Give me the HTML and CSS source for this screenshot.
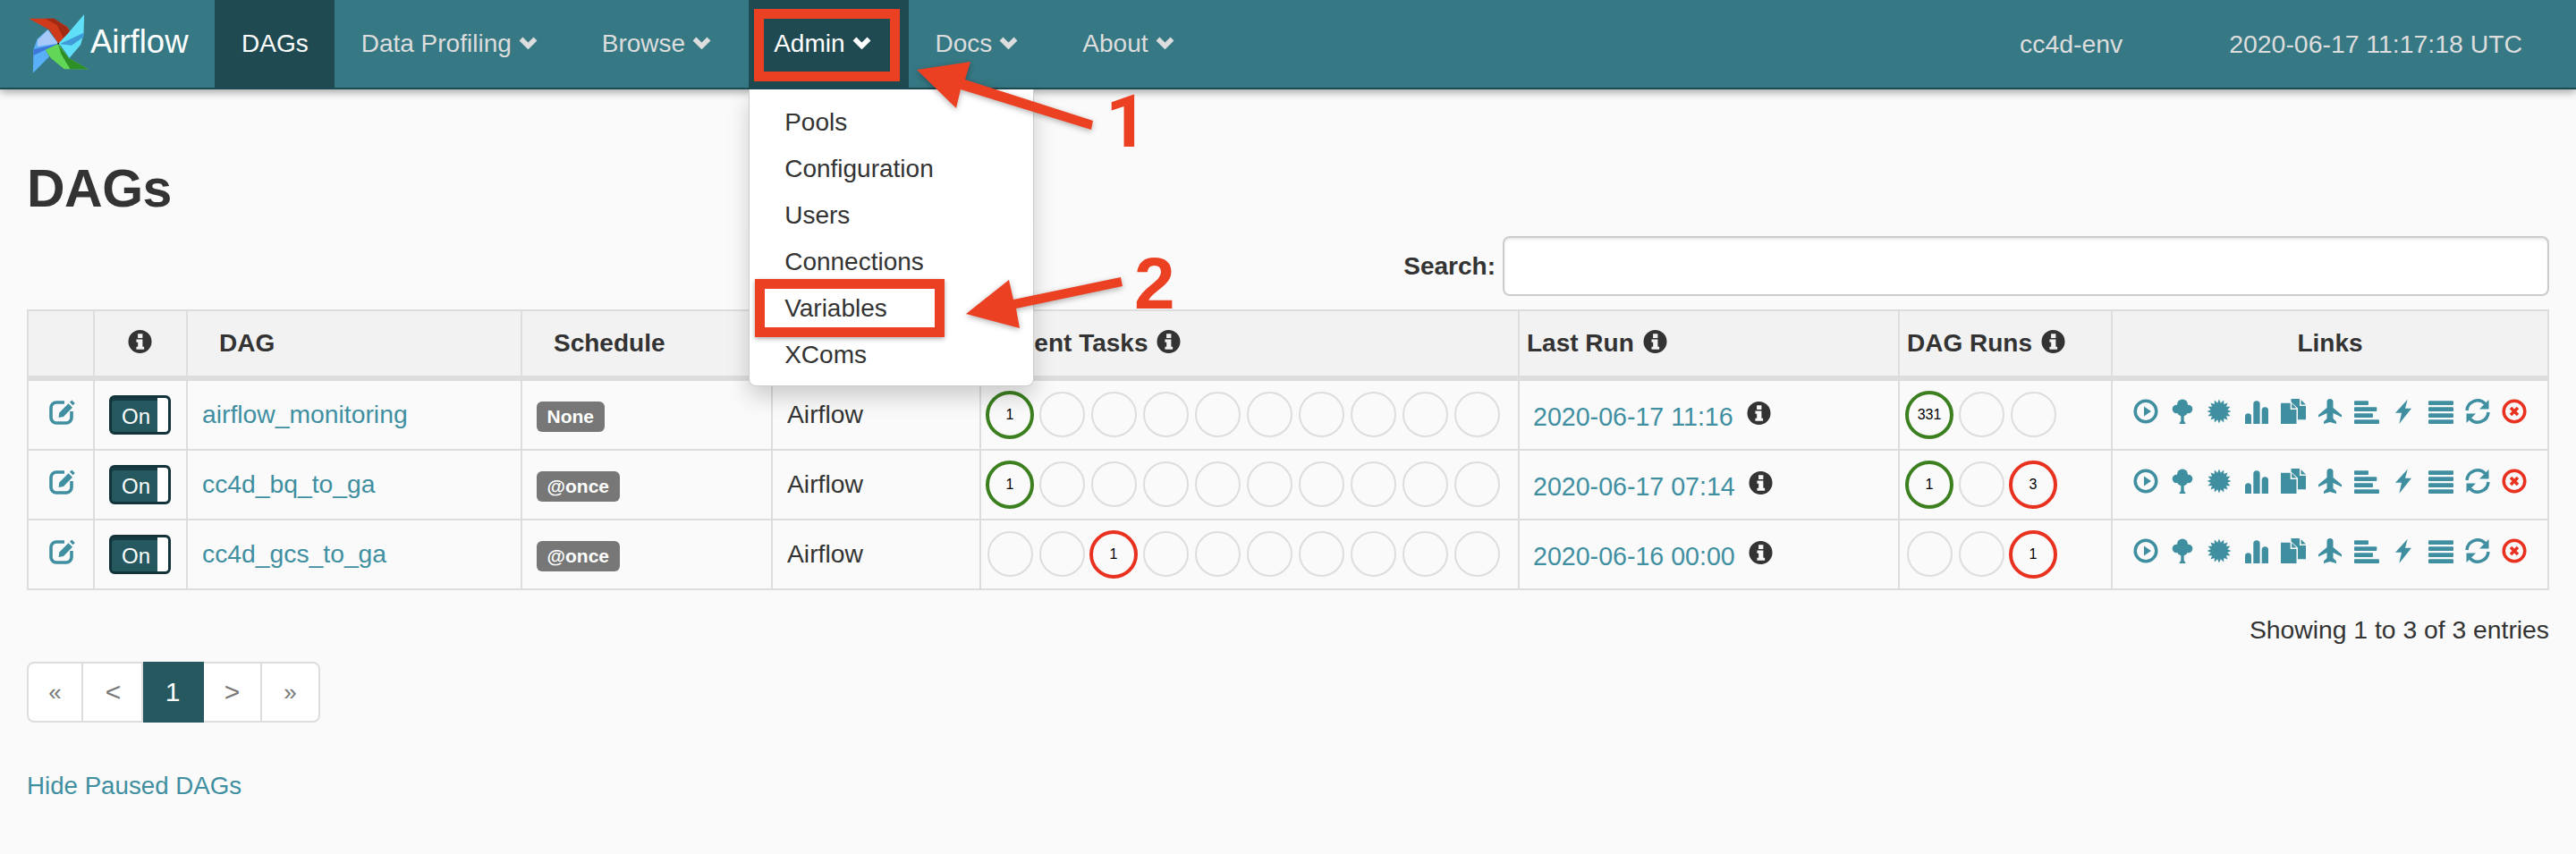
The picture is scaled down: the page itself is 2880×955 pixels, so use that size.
FILE: index.html
```html
<!DOCTYPE html>
<html lang="en">
<head>
<meta charset="utf-8">
<title>DAGs - Airflow</title>
<link rel="stylesheet" href="styles.css">
</head>
<body>
<svg class="sprite" width="0" height="0" aria-hidden="true">
  <symbol id="i-info" viewBox="0 0 28 28"><path fill-rule="evenodd" d="M14 .5a13.5 13.5 0 1 0 0 27 13.500 13.500 0 0 0 0-27zM11.500 5h5.500v4.800h-5.500zM9.800 11.500h7.200v8.500h1.800v3.200H9.800V20h1.800v-5.300H9.800z"/></symbol>
  <symbol id="i-edit" viewBox="0 0 29 28"><path class="ln" d="M17 3H8a6 6 0 0 0-6 6v11a6 6 0 0 0 6 6h11a6 6 0 0 0 6-6v-7"/><path d="M10.500 20l.800-5.500L21.500 4.300l4.500 4.500L16 19zM23 2.800l2.300-2.300 3.500 3.500-2.300 2.300z"/></symbol>
  <symbol id="i-play" viewBox="0 0 28 28"><circle class="ln" cx="14" cy="14" r="11.800"/><path d="M12 8.500l8 5.500-8 5.500z"/></symbol>
  <symbol id="i-tree" viewBox="0 0 28 28"><circle cx="14" cy="6.500" r="6"/><circle cx="7.500" cy="11.500" r="4.800"/><circle cx="20.500" cy="11.500" r="4.800"/><circle cx="14" cy="13" r="6.500"/><path d="M12.300 15h3.400v9.500l2 3.500H10.300l2-3.500z"/></symbol>
  <symbol id="i-burst" viewBox="0 0 28 28"><polygon points="27.500,14 23.320,15.850 26.470,19.170 21.900,19.280 23.550,23.550 19.280,21.900 19.170,26.470 15.850,23.320 14,27.500 12.150,23.320 8.830,26.470 8.720,21.900 4.450,23.550 6.100,19.280 1.530,19.170 4.680,15.850 .5,14 4.680,12.150 1.530,8.830 6.100,8.720 4.450,4.450 8.720,6.100 8.830,1.530 12.150,4.680 14,.5 15.850,4.680 19.170,1.530 19.280,6.100 23.550,4.450 21.900,8.720 26.470,8.830 23.320,12.150"/></symbol>
  <symbol id="i-bars" viewBox="0 0 28 28"><path d="M1 28V19.800a3.500 3.500 0 0 1 7 0V28zM10.300 28V5.800a3.600 3.600 0 0 1 7.300 0V28zM19.700 28V12.800a3.600 3.600 0 0 1 7.300 0V28z"/></symbol>
  <symbol id="i-files" viewBox="0 0 28 28"><path d="M0 4.700h10.700V12h6.800v16H0zM12.200 5l5.300 5.500h-5.300zM11.500 0H21v8h7v15.300h-9V10.500L11.500 3.500zM22.500 1l5.500 5.500h-5.500z"/></symbol>
  <symbol id="i-plane" viewBox="0 0 28 28"><path d="M14 0a3.500 3.500 0 0 1 3.500 3.500V10l9.500 8v2.500L17.500 16v6l3.500 3.500V28l-7-2-7 2v-2.500l3.500-3.500v-6L1 20.500V18l9.500-8V3.500A3.500 3.500 0 0 1 14 0z"/></symbol>
  <symbol id="i-align" viewBox="0 0 28 28"><rect y="2.300" width="16" height="4.700" rx="1"/><rect y="9.300" width="25.300" height="4.700" rx="1"/><rect y="16.300" width="21" height="4.700" rx="1"/><rect y="23.300" width="28" height="4.700" rx="1"/></symbol>
  <symbol id="i-flash" viewBox="0 0 28 28"><path d="M18.700.7L5 15.700h7L9.300 28 23 10.700h-7z"/></symbol>
  <symbol id="i-list" viewBox="0 0 28 28"><rect y="2.300" width="28" height="4.700" rx="1"/><rect y="9.300" width="28" height="4.700" rx="1"/><rect y="16.300" width="28" height="4.700" rx="1"/><rect y="23.300" width="28" height="4.700" rx="1"/></symbol>
  <symbol id="i-sync" viewBox="0 0 28 28"><path class="ln" d="M2 13A12 12 0 0 1 22.500 5.500M26 15A12 12 0 0 1 5.500 22.500"/><path d="M26.500 1v10.500H16zM1.500 27V16.500H12z"/></symbol>
  <symbol id="i-remove" viewBox="0 0 28 28"><circle class="ln" cx="14" cy="14" r="11.800"/><path class="ln" d="M10 10l8 8M18 10l-8 8"/></symbol>
  <symbol id="i-chev" viewBox="0 0 21 14"><path class="ln" d="M2.500 2.500l8 8 8-8"/></symbol>
</svg>

<header class="navbar">
  <a class="brand">
    <svg class="logo" viewBox="96 48 200 198" aria-hidden="true">
      <path fill="#cf3a1b" d="M96 62h84l45 28 17 28-20 17-27 11-30-46z"/>
      <path fill="#a32a14" d="M150 62h32l42 30 18 26-28 12-24-46z"/>
      <path fill="#5fe0f8" d="M282 48l-2 67-10 35-38 45-27-40-10-9 30-31z"/>
      <path fill="#3f9ad8" d="M200 148l80-38v14l-40 28z"/>
      <path fill="#62d657" d="M295 232h-80l-45-37-20-30 45-19 35 49z"/>
      <path fill="#2f8f27" d="M195 150l35 45 65 37h-60l-30-50z"/>
      <path fill="#5ab0f8" d="M110 245l2-80 13-35 35-30 35 46-45 19 15 25z"/>
      <path fill="#a5c8f8" d="M125 135l35-35 35 46-70 10z"/>
      <path fill="#3f78dc" d="M112 165l83-19-40 20-43 20z"/>
      <circle cx="195" cy="146" r="3" fill="#111"/>
    </svg>
    <span class="brand-name">Airflow</span>
  </a>
  <ul class="menu">
    <li class="menu-item is-active plain"><span>DAGs</span></li>
    <li class="menu-item"><span>Data Profiling</span><svg class="chev"><use href="#i-chev"/></svg></li>
    <li class="menu-item"><span>Browse</span><svg class="chev"><use href="#i-chev"/></svg></li>
    <li class="menu-item is-open">
      <span>Admin</span><svg class="chev"><use href="#i-chev"/></svg>
      <ul class="dropdown">
        <li>Pools</li>
        <li>Configuration</li>
        <li>Users</li>
        <li>Connections</li>
        <li>Variables</li>
        <li>XComs</li>
      </ul>
    </li>
    <li class="menu-item"><span>Docs</span><svg class="chev"><use href="#i-chev"/></svg></li>
    <li class="menu-item"><span>About</span><svg class="chev"><use href="#i-chev"/></svg></li>
  </ul>
  <div class="nav-right">
    <span class="env">cc4d-env</span>
    <span class="clock">2020-06-17 11:17:18 UTC</span>
  </div>
</header>

<main class="container">
  <h1 class="title">DAGs</h1>
  <div class="search-row">
    <label class="search-label" for="q">Search:</label>
    <input class="search-input" id="q" type="text">
  </div>

  <table class="dags">
    <colgroup>
      <col class="c-edit"><col class="c-switch"><col class="c-dag"><col class="c-sched"><col class="c-owner"><col class="c-recent"><col class="c-last"><col class="c-runs"><col class="c-links">
    </colgroup>
    <thead>
      <tr>
        <th></th>
        <th class="th-center th-icon"><svg class="info"><use href="#i-info"/></svg></th>
        <th class="th-wide">DAG</th>
        <th class="th-wide">Schedule</th>
        <th class="th-wide"></th>
        <th><span class="th-in">Recent Tasks<svg class="info"><use href="#i-info"/></svg></span></th>
        <th><span class="th-in">Last Run<svg class="info"><use href="#i-info"/></svg></span></th>
        <th><span class="th-in">DAG Runs<svg class="info"><use href="#i-info"/></svg></span></th>
        <th class="th-center">Links</th>
      </tr>
    </thead>
    <tbody>
      <tr>
        <td class="td-edit"><svg class="edit"><use href="#i-edit"/></svg></td>
        <td><div class="switch"><span class="switch-on">On</span><span class="switch-handle"></span></div></td>
        <td class="td-name"><a class="link">airflow_monitoring</a></td>
        <td class="td-sched"><span class="label">None</span></td>
        <td class="td-name">Airflow</td>
        <td class="td-circles"><div class="circles"><span class="slot"><span class="dot ok">1</span></span><span class="slot"><span class="dot"></span></span><span class="slot"><span class="dot"></span></span><span class="slot"><span class="dot"></span></span><span class="slot"><span class="dot"></span></span><span class="slot"><span class="dot"></span></span><span class="slot"><span class="dot"></span></span><span class="slot"><span class="dot"></span></span><span class="slot"><span class="dot"></span></span><span class="slot"><span class="dot"></span></span></div></td>
        <td class="td-date"><span class="date"><a class="link">2020-06-17 11:16</a><svg class="info"><use href="#i-info"/></svg></span></td>
        <td class="td-circles"><div class="circles runs"><span class="slot"><span class="dot ok">331</span></span><span class="slot"><span class="dot"></span></span><span class="slot"><span class="dot"></span></span></div></td>
        <td class="td-links"><div class="icons"><svg><use href="#i-play"/></svg><svg><use href="#i-tree"/></svg><svg><use href="#i-burst"/></svg><svg><use href="#i-bars"/></svg><svg><use href="#i-files"/></svg><svg><use href="#i-plane"/></svg><svg><use href="#i-align"/></svg><svg><use href="#i-flash"/></svg><svg><use href="#i-list"/></svg><svg><use href="#i-sync"/></svg><svg class="danger"><use href="#i-remove"/></svg></div></td>
      </tr>
      <tr>
        <td class="td-edit"><svg class="edit"><use href="#i-edit"/></svg></td>
        <td><div class="switch"><span class="switch-on">On</span><span class="switch-handle"></span></div></td>
        <td class="td-name"><a class="link">cc4d_bq_to_ga</a></td>
        <td class="td-sched"><span class="label">@once</span></td>
        <td class="td-name">Airflow</td>
        <td class="td-circles"><div class="circles"><span class="slot"><span class="dot ok">1</span></span><span class="slot"><span class="dot"></span></span><span class="slot"><span class="dot"></span></span><span class="slot"><span class="dot"></span></span><span class="slot"><span class="dot"></span></span><span class="slot"><span class="dot"></span></span><span class="slot"><span class="dot"></span></span><span class="slot"><span class="dot"></span></span><span class="slot"><span class="dot"></span></span><span class="slot"><span class="dot"></span></span></div></td>
        <td class="td-date"><span class="date"><a class="link">2020-06-17 07:14</a><svg class="info"><use href="#i-info"/></svg></span></td>
        <td class="td-circles"><div class="circles runs"><span class="slot"><span class="dot ok">1</span></span><span class="slot"><span class="dot"></span></span><span class="slot"><span class="dot bad">3</span></span></div></td>
        <td class="td-links"><div class="icons"><svg><use href="#i-play"/></svg><svg><use href="#i-tree"/></svg><svg><use href="#i-burst"/></svg><svg><use href="#i-bars"/></svg><svg><use href="#i-files"/></svg><svg><use href="#i-plane"/></svg><svg><use href="#i-align"/></svg><svg><use href="#i-flash"/></svg><svg><use href="#i-list"/></svg><svg><use href="#i-sync"/></svg><svg class="danger"><use href="#i-remove"/></svg></div></td>
      </tr>
      <tr>
        <td class="td-edit"><svg class="edit"><use href="#i-edit"/></svg></td>
        <td><div class="switch"><span class="switch-on">On</span><span class="switch-handle"></span></div></td>
        <td class="td-name"><a class="link">cc4d_gcs_to_ga</a></td>
        <td class="td-sched"><span class="label">@once</span></td>
        <td class="td-name">Airflow</td>
        <td class="td-circles"><div class="circles"><span class="slot"><span class="dot"></span></span><span class="slot"><span class="dot"></span></span><span class="slot"><span class="dot bad">1</span></span><span class="slot"><span class="dot"></span></span><span class="slot"><span class="dot"></span></span><span class="slot"><span class="dot"></span></span><span class="slot"><span class="dot"></span></span><span class="slot"><span class="dot"></span></span><span class="slot"><span class="dot"></span></span><span class="slot"><span class="dot"></span></span></div></td>
        <td class="td-date"><span class="date"><a class="link">2020-06-16 00:00</a><svg class="info"><use href="#i-info"/></svg></span></td>
        <td class="td-circles"><div class="circles runs"><span class="slot"><span class="dot"></span></span><span class="slot"><span class="dot"></span></span><span class="slot"><span class="dot bad">1</span></span></div></td>
        <td class="td-links"><div class="icons"><svg><use href="#i-play"/></svg><svg><use href="#i-tree"/></svg><svg><use href="#i-burst"/></svg><svg><use href="#i-bars"/></svg><svg><use href="#i-files"/></svg><svg><use href="#i-plane"/></svg><svg><use href="#i-align"/></svg><svg><use href="#i-flash"/></svg><svg><use href="#i-list"/></svg><svg><use href="#i-sync"/></svg><svg class="danger"><use href="#i-remove"/></svg></div></td>
      </tr>
    </tbody>
  </table>

  <p class="entries">Showing 1 to 3 of 3 entries</p>

  <ul class="pager">
    <li class="pg pg-first">«</li>
    <li class="pg pg-prev">&lt;</li>
    <li class="pg pg-cur">1</li>
    <li class="pg pg-next">&gt;</li>
    <li class="pg pg-last">»</li>
  </ul>

  <p class="hide-paused"><a class="link">Hide Paused DAGs</a></p>
</main>

<div class="mark mark-admin"></div>
<div class="mark mark-vars"></div>
<svg class="arrows" viewBox="0 0 2880 955" aria-hidden="true">
  <polygon points="1025,78 1085,69 1079,89 1222,135 1220,145 1074,100 1069,121"/>
  <polygon points="1080,351 1128,313 1133,335 1253,310 1255,320 1136,345 1140,367"/>
</svg>
<span class="num num-1">1</span>
<span class="num num-2">2</span>
</body>
</html>
```
FILE: styles.css
```css
* { box-sizing: border-box; }

html, body {
  margin: 0;
  padding: 0;
}

body {
  position: relative;
  min-height: 955px;
  overflow: hidden;
  background: #fafafa;
  color: #333;
  font-family: "Liberation Sans", Arial, sans-serif;
  font-size: 28px;
  line-height: 40px;
}

ul { margin: 0; padding: 0; list-style: none; }
p { margin: 0; }

.sprite { position: absolute; }
symbol .ln, .ln { fill: none; stroke: currentColor; }

/* nav */
.navbar {
  position: relative;
  z-index: 2;
  display: flex;
  align-items: stretch;
  height: 100px;
  padding-left: 30px;
  background: #367884;
  border-bottom: 2px solid #1c4a52;
  box-shadow: 0 3px 9px rgba(0, 0, 0, .35);
  color: #ddd;
}

.brand {
  display: flex;
  align-items: flex-start;
  width: 210px;
}

.logo {
  width: 67px;
  height: 66px;
  margin: 16px 0 0 2px;
}

.brand-name {
  color: #fff;
  font-size: 36.5px;
  line-height: 42px;
  margin: 26px 0 0 2px;
}

.menu { display: flex; }

.menu-item {
  position: relative;
  display: flex;
  align-items: center;
  gap: 8px;
  height: 98px;
  padding: 0 42px 0 30px;
}

.menu-item.plain { padding-right: 29px; }
.menu-item.is-active { background: #1f4a52; color: #fff; }
.menu-item.is-open { background: #1f4a52; color: #fff; padding-left: 28px; }

.chev {
  width: 21px;
  height: 14px;
  margin-top: -2px;
  stroke-width: 5.500px;
}

.nav-right {
  display: flex;
  align-items: center;
  margin-left: auto;
  padding-right: 60px;
  height: 98px;
  font-size: 28.400px;
}

.env { margin-right: 119px; }

.dropdown {
  position: absolute;
  top: 100px;
  left: 0;
  width: 319px;
  height: 332px;
  padding: 11px 0 9px;
  background: #fff;
  border: 1px solid rgba(0, 0, 0, .2);
  border-top: 0;
  border-radius: 0 0 8px 8px;
  box-shadow: 0 12px 24px rgba(0, 0, 0, .18);
  color: #333;
}

.dropdown li {
  height: 52px;
  padding-left: 39px;
  line-height: 52px;
}

/* page */
.container { padding: 0 30px; }

.title {
  margin: 78px 0 0;
  font-size: 59px;
  line-height: 66px;
  font-weight: bold;
  letter-spacing: -.5px;
}

.search-row {
  display: flex;
  justify-content: flex-end;
  align-items: center;
  gap: 8px;
  margin-top: 20px;
}

.search-label { font-weight: bold; }

.search-input {
  width: 1170px;
  height: 67px;
  background: #fff;
  border: 2px solid #ccc;
  border-radius: 8px;
  box-shadow: inset 0 2px 2px rgba(0, 0, 0, .075);
}

/* table */
.dags {
  width: 2820px;
  margin-top: 15px;
  border-collapse: collapse;
  table-layout: fixed;
}

.c-edit { width: 74px; }
.c-switch { width: 104px; }
.c-dag { width: 374px; }
.c-sched { width: 280px; }
.c-owner { width: 233px; }
.c-recent { width: 602px; }
.c-last { width: 425px; }
.c-runs { width: 238px; }
.c-links { width: 488px; }

.dags th {
  height: 76px;
  padding: 0 0 0 8px;
  background: #f2f2f2;
  border: 2px solid #ddd;
  border-bottom-width: 6px;
  text-align: left;
  font-weight: bold;
}

.dags th.th-wide { padding-left: 35px; }
.dags th.th-center { padding: 0; text-align: center; }
.dags th.th-icon { padding-right: 2px; }

.th-in {
  display: inline-flex;
  align-items: center;
  gap: 10px;
  white-space: nowrap;
}

.dags td {
  height: 78px;
  padding: 0 0 0 16px;
  border: 2px solid #ddd;
  vertical-align: middle;
}

.dags tbody tr:first-child td { height: 80px; }

.info {
  display: block;
  width: 27px;
  height: 28px;
  margin-top: -4px;
  fill: #333;
}

.th-center .info { margin: -4px auto 0; }

.link { color: #3f8fa1; text-decoration: none; }

.td-edit { text-align: center; }
.dags td.td-edit { padding: 0 0 7px 0; }

.edit {
  display: block;
  width: 29px;
  height: 28px;
  margin: 0 0 0 23px;
  color: #3f8fa1;
  fill: #3f8fa1;
  stroke-width: 3.600px;
}

.switch {
  display: flex;
  width: 69px;
  height: 44px;
  background: #25595f;
  border: 3px solid #12333a;
  border-radius: 6px;
  box-shadow: inset 0 3px 0 #153a41;
  color: #fff;
  overflow: hidden;
}

.switch-on {
  flex: 1;
  padding-left: 11px;
  font-size: 24px;
  line-height: 42px;
}

.switch-handle {
  width: 12px;
  background: #fff;
  border-radius: 0 3px 3px 0;
}

.dags td.td-name { padding-bottom: 2px; font-size: 28.300px; }

.label {
  display: inline-block;
  height: 34px;
  padding: 0 11.500px;
  background: #777;
  border-radius: 6px;
  color: #fff;
  font-size: 21px;
  font-weight: bold;
  line-height: 34px;
  vertical-align: middle;
}

.dags td.td-circles { padding: 0 0 1px 3px; }

.circles { display: flex; }
.circles.runs { padding-left: 1px; }

.slot {
  display: flex;
  align-items: center;
  justify-content: center;
  flex: 0 0 58px;
  height: 56px;
}

.dot {
  display: flex;
  align-items: center;
  justify-content: center;
  flex: 0 0 auto;
  width: 51px;
  height: 51px;
  border: 2px solid #ddd;
  border-radius: 50%;
  color: #000;
  font-size: 16px;
  line-height: 16px;
}

.dot.ok, .dot.bad { width: 54px; height: 54px; border-width: 4px; }
.dot.ok { border-color: #3b7f1f; }
.dot.bad { border-color: #e8311f; }

.dags td.td-date { padding-top: 4px; padding-left: 15px; }

.date {
  display: inline-flex;
  align-items: center;
  gap: 15px;
  font-size: 28.600px;
}

.date .info { margin-top: -8px; }

.dags td.td-links { padding: 0 0 8px 0; }

.icons {
  display: flex;
  justify-content: center;
  gap: 13.200px;
  color: #3f8fa1;
  fill: #3f8fa1;
}

.icons svg {
  display: block;
  width: 28px;
  height: 28px;
  stroke-width: 3.500px;
}

.icons .danger { color: #e8311f; fill: #e8311f; }

.entries {
  margin-top: 24px;
  text-align: right;
  font-size: 28.300px;
}

/* pager */
.pager {
  display: flex;
  margin-top: 16px;
  width: 328px;
  height: 68px;
  color: #777;
}

.pg {
  display: flex;
  align-items: center;
  justify-content: center;
  background: #fff;
  border: 2px solid #ddd;
  border-left-width: 0;
  font-size: 30px;
}

.pg-first {
  width: 63px;
  border-left-width: 2px;
  border-radius: 8px 0 0 8px;
  font-size: 26px;
}

.pg-prev { width: 67px; padding-left: 2px; }

.pg-cur {
  width: 68px;
  background: #25595f;
  border-color: #25595f;
  color: #fff;
}

.pg-next { width: 65px; }

.pg-last {
  width: 65px;
  border-radius: 0 8px 8px 0;
  font-size: 26px;
}

.hide-paused { margin-top: 51px; font-size: 27.700px; }

/* annotations over the page */
.mark {
  position: absolute;
  z-index: 3;
  border: 11px solid #ec4023;
}

.mark-admin { left: 843px; top: 10px; width: 163px; height: 81px; }
.mark-vars {
  left: 844px;
  top: 312px;
  width: 212px;
  height: 65px;
  box-shadow: 0 2px 5px rgba(0, 0, 0, .3);
}

.arrows {
  position: absolute;
  z-index: 3;
  left: 0;
  top: 0;
  width: 2880px;
  height: 955px;
  fill: #ec4023;
  filter: drop-shadow(0 2px 3px rgba(0, 0, 0, .3));
}

.num {
  position: absolute;
  z-index: 3;
  color: #ec4023;
  font-size: 82px;
  font-weight: bold;
  line-height: 82px;
}

.num-1 { left: 1236px; top: 95px; font-family: Roboto, "Liberation Sans", sans-serif; }
.num-2 { left: 1268px; top: 276px; }
```
